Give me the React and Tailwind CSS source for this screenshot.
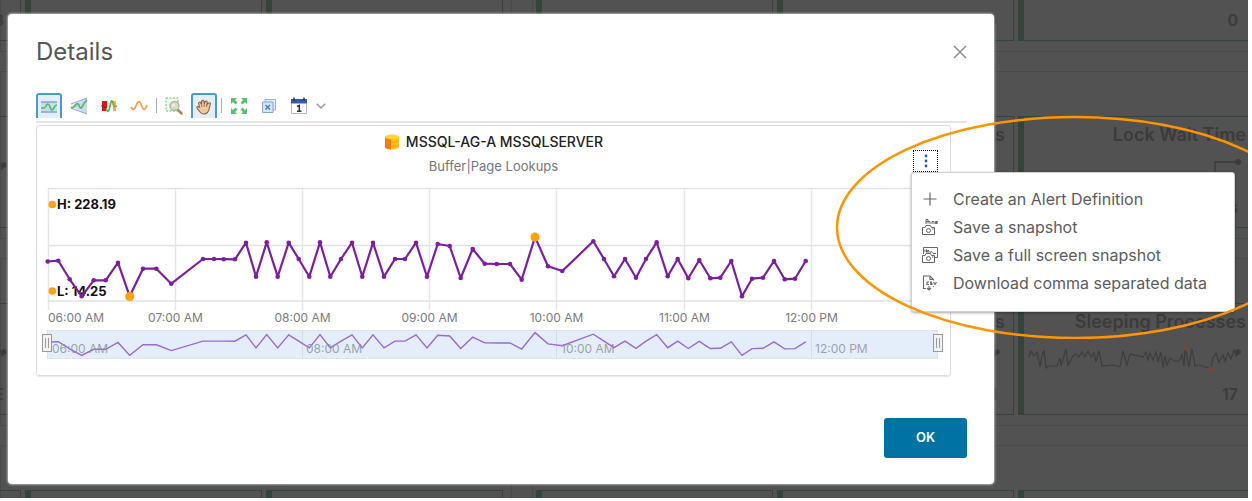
import React from "react";

const SERIES = [
  [47.7, 261.5], [58.3, 260.7], [69.7, 279.3], [81.7, 296.3], [93.7, 280.3], [105.7, 280.3], [118, 262.7],
  [129.7, 296.3], [143, 268.7], [156.3, 268.7], [171.3, 283.7], [203, 259], [214, 259], [223.7, 259.2],
  [235, 259.3], [246, 242.7], [256, 276.7], [266.7, 242.3], [277.7, 276.7], [288.7, 242.7], [298.7, 259],
  [309.3, 276.7], [320, 242.3], [330.3, 276.7], [341, 259], [352, 242.7], [362.3, 276.7], [373, 242.7],
  [384, 276.7], [395, 259], [405, 259], [416, 242.7], [427, 276.7], [437.7, 244], [449.7, 246], [460.7, 278],
  [472.7, 249], [484.7, 263.7], [496.7, 264], [510, 264], [521.7, 279.7], [535, 237], [548, 266.3],
  [562.3, 271], [593.3, 241.3], [604, 259], [614, 276.3], [625, 259], [636, 277.7], [646, 259], [656.7, 242.3],
  [667.7, 276.3], [677.7, 259], [688.3, 278.3], [699.3, 260], [710.3, 278.3], [720.3, 277.7], [731.3, 261],
  [742, 296.3], [752, 278.7], [763, 277.7], [774, 261], [784.7, 279.3], [795, 278.7], [805.7, 261],
];
const LINE = SERIES.map((p) => p.join(",")).join(" ");
const OVERVIEW = SERIES.map(([x, y]) => `${x},${(334.7 + (y - 242.5) * 0.385).toFixed(1)}`).join(" ");

const TICKS = [
  [48, "06:00 AM", "start"], [175.5, "07:00 AM", "middle"], [302.5, "08:00 AM", "middle"],
  [429.5, "09:00 AM", "middle"], [556.5, "10:00 AM", "middle"], [684.5, "11:00 AM", "middle"],
  [811.5, "12:00 PM", "middle"],
];
const RANGE_TICKS = [[52, "06:00 AM"], [306, "08:00 AM"], [561, "10:00 AM"], [815, "12:00 PM"]];

const SPARK =
  "0,9 2,3 5,8 8,4 11,19 13,8 15,2 17,20 19,18 28,18 31,10 32,18 35,8 37,1 39,17 44,8 47,6 50,9 53,4 56,9 59,3 62,9 65,5 67,14 70,3 73,18 85,17 91,19 94,3 98,17 101,6 114,9 117,4 119,12 121,5 124,12 127,4 129,14 132,4 134,20 136,8 138,17 141,10 145,13 150,13 153,7 155,18 156,0 160,19 163,1 166,18 170,17 176,19 182,20 184,10 187,5 190,14 194,7 196,13 199,5 202,11 205,2 207,8 210,4";

function Card({ title, value, spark, step }) {
  return (
    <article className="flex h-28 w-[237px] shrink-0 flex-col items-end border border-l-[6px] border-[#33453a] pr-2 font-semibold text-[#3b3b3b]">
      <h3 className="mt-1 h-7 text-lg leading-7 whitespace-nowrap">{title}</h3>
      <svg viewBox="0 0 222 30" className="mt-2 h-[30px] w-[222px]" aria-hidden="true">
        {spark && (
          <>
            <polyline points={SPARK} transform="translate(5 4)" fill="none" stroke="#3d3d3d" strokeWidth="1.2" />
            <circle cx="161" cy="4" r="2.6" fill="#7d4533" />
            <circle cx="187" cy="25" r="2.6" fill="#7d4533" />
            <circle cx="214" cy="8" r="2.8" fill="#3b3b3b" />
          </>
        )}
        {step && (
          <>
            <path d="M191 18V5H214" fill="none" stroke="#3b3b3b" strokeWidth="1.5" />
            <circle cx="214" cy="5" r="3" fill="#3b3b3b" />
          </>
        )}
      </svg>
      <p className="mt-2 mr-2 h-6 text-base leading-6">{value}</p>
    </article>
  );
}

function Panel({ cards, className }) {
  return (
    <section className={"flex h-[168px] gap-1 border border-[#494949] pt-11 " + className}>
      {cards.map((c, i) => (
        <Card key={i} {...c} />
      ))}
    </section>
  );
}

const DASHBOARD = [
  [[{ value: "3" }, {}, {}], [{}, { value: "0" }, { value: "0" }]],
  [[{ spark: true }, {}, {}], [{}, { title: "Waits" }, { title: "Lock Wait Time", value: "ms", step: true }]],
  [
    [{ value: "NONE", spark: true }, {}, {}],
    [{}, { title: "User Processes", value: "1", spark: true }, { title: "Sleeping Processes", value: "17", spark: true }],
  ],
  [[{}, {}, {}], [{}, {}, {}]],
];

function Dashboard() {
  return (
    <div className="absolute inset-0 overflow-hidden bg-[#525252]" aria-hidden="true">
      <div className="-mt-[116px] flex flex-col gap-[19px]">
        {DASHBOARD.map(([left, right], i) => (
          <div key={i} className="flex gap-5">
            <Panel cards={left} className="w-[512px] shrink-0 justify-end pr-2" />
            <Panel cards={right} className="flex-1 pl-[3px]" />
          </div>
        ))}
      </div>
    </div>
  );
}

function Tool({ label, active, children }) {
  return (
    <button
      type="button"
      aria-label={label}
      aria-pressed={!!active}
      className={
        "flex h-[25px] w-[26px] items-center justify-center " +
        (active ? "rounded-t-[3px] border-2 border-b-0 border-[#4c9ac9] bg-[#e1eff7]" : "")
      }
    >
      <svg viewBox="0 0 18 18" className="size-[18px] shrink-0" fill="none">
        {children}
      </svg>
    </button>
  );
}

function Toolbar() {
  return (
    <div role="toolbar" aria-label="Chart tools" className="flex items-center gap-1">
      <Tool label="Dynamic threshold" active>
        <path d="M1 4H17V14H1Z" fill="#c9dcec" />
        <path d="M1 4H17M1 14H17" stroke="#86a3cf" strokeWidth="1.3" />
        <path d="M1 10H4C6 10 6 6 8 6S10 12 12 12S14 7 17 7" stroke="#4cba5d" strokeWidth="1.6" />
      </Tool>
      <Tool label="Trend line">
        <path d="M1 9L17 1V17Z" fill="#ccd8ec" />
        <path d="M1 7L17 1M1 11L17 17" stroke="#93aad4" strokeWidth="1.3" />
        <path d="M1 10C4 13 6 5 8 7S10 13 12 10S14 5 17 3" stroke="#4cba5d" strokeWidth="1.6" />
      </Tool>
      <Tool label="Anomalies">
        <path d="M2 4H7V14H2Z" fill="#f20d0d" />
        <path d="M13 4H16V14H13Z" fill="#ffb347" />
        <path d="M1 9H2M6 11C8 17 9 14 10 9S12 2 13 6S14 10 17 9" stroke="#4cba5d" strokeWidth="1.7" />
        <path d="M3 9L6 11" stroke="#7e2a16" strokeWidth="1.7" />
        <path d="M13 5L14 10" stroke="#e58a20" strokeWidth="1.7" />
      </Tool>
      <Tool label="Data line">
        <path d="M1 10C3 14 5 12 6 9S9 2 11 7S14 16 17 8" stroke="#f5a04a" strokeWidth="1.7" />
      </Tool>
      <span className="h-[15px] w-px bg-[#aaaaaa]" />
      <Tool label="Zoom the view">
        <path d="M1 1H13V14H1Z" fill="#eefaee" stroke="#62c76a" strokeDasharray="2 1.5" />
        <path d="M12.5 12.5L16.5 16.5" stroke="#a48d5a" strokeWidth="2.5" strokeLinecap="round" />
        <circle cx="9.5" cy="9" r="4.5" fill="#d5dfb0" stroke="#a7b5bd" strokeWidth="1.3" />
        <circle cx="8.5" cy="8" r="1.8" fill="#f5f2cd" />
      </Tool>
      <Tool label="Pan the view" active>
        <path
          d="M5.5 14.5C4 12.5 1.5 10.5 1.8 9.3S4 8.5 4.8 9.6L3.6 5.6C3.3 4 5.2 3.6 5.8 5L6.5 6.5L6.6 3.6C6.7 2 8.9 2 9 3.6L9.3 6L10 3.8C10.5 2.4 12.5 2.9 12.2 4.5L12 6.8L13.5 5.2C14.6 4.2 16 5.3 15.3 6.6C14.3 9 14.5 12 12.5 14.5C10.5 16.5 7 16.5 5.5 14.5Z"
          fill="#f0c89d"
          stroke="#8c6546"
          strokeWidth="1.1"
        />
        <path d="M6.5 6.5L7 9M9.3 6L9.2 9M12 6.8L11.3 9" stroke="#8c6546" strokeWidth=".8" />
      </Tool>
      <span className="h-[15px] w-px bg-[#aaaaaa]" />
      <Tool label="Fit to view">
        <path
          d="M1 1H7L5 3L7.5 5.5L5.500 7.5L3 5L1 7ZM17 1V7L15 5L12.5 7.5L10.5 5.5L13 3L11 1ZM1 17V11L3 13L5.5 10.5L7.5 12.5L5 15L7 17ZM17 17H11L13 15L10.5 12.5L12.5 10.5L15 13L17 11Z"
          fill="#58c071"
        />
      </Tool>
      <Tool label="Show point values">
        <path d="M5 2.5H15.5V13H5Z" fill="#e1ebf5" stroke="#9bb5d1" />
        <path d="M2.5 5H13V15.5H2.5Z" fill="#d6e5f3" stroke="#84a7cd" />
        <path d="M5.5 8L10 12.5M10 8L5.5 12.5" stroke="#457fbb" strokeWidth="1.5" />
      </Tool>
      <Tool label="Date range">
        <path d="M1.5 3H16.5V16.5H1.5Z" fill="#fff" stroke="#a9b8e3" />
        <path d="M1 2H17V6.5H1Z" fill="#395b9d" />
        <path d="M4 .5V4M14 .5V4" stroke="#224078" strokeWidth="1.6" />
        <path d="M7 9.5L9.3 8.5V14M7 14.3H11.5" stroke="#333" strokeWidth="1.5" />
      </Tool>
      <button type="button" aria-label="More date options">
        <svg viewBox="0 0 10 8" className="h-2 w-[10px]" fill="none">
          <path d="M.8 1.8L5 6L9.2 1.8" stroke="#999" strokeWidth="1.5" />
        </svg>
      </button>
    </div>
  );
}

function Handle({ x }) {
  return (
    <g>
      <rect x={x + 0.5} y="334.5" width="9" height="17" fill="#f2f2f2" stroke="#999" />
      <path d={`M${x + 3.5} 338V348M${x + 6.5} 338V348`} stroke="#999" />
    </g>
  );
}

function Chart() {
  return (
    <svg viewBox="37 182 913 188" className="h-auto w-full" role="img" aria-label="Buffer Page Lookups over time">
      <path d="M48 188.5H938M48 245.5H938M48 301H938" stroke="#e0e2e6" strokeWidth="1.5" />
      <path
        d="M48.5 188V310M175.5 188V310M302.5 188V310M429.5 188V310M556.5 188V310M684.5 188V310M811.5 188V310M938 188V301"
        stroke="#e3e5e9"
        strokeWidth="1.5"
      />
      <g className="text-[12px]" fill="#7b7b7b">
        {TICKS.map(([x, t, a]) => (
          <text key={t} x={x} y="322" textAnchor={a}>{t}</text>
        ))}
      </g>
      <rect x="47.5" y="330.5" width="890" height="28" fill="#e4eefa" stroke="#dfe3e8" />
      <path d="M302.5 331V358M556.5 331V358M811.5 331V358" stroke="#d2dcea" />
      <polyline points={OVERVIEW} fill="none" stroke="#9b6acb" strokeWidth="1.4" />
      <g className="text-[12px]" fill="#8b929a" fillOpacity=".85">
        {RANGE_TICKS.map(([x, t]) => (
          <text key={t} x={x} y="353">{t}</text>
        ))}
      </g>
      <Handle x={42} />
      <Handle x={933} />
      <g className="text-[13px] font-bold" fill="#111">
        <text x="57" y="209">H: 228.19</text>
        <text x="57" y="296">L: 14.25</text>
      </g>
      <polyline points={LINE} fill="none" stroke="#7a1fa2" strokeWidth="2.2" strokeLinejoin="round" />
      {SERIES.map(([x, y]) => (
        <circle key={x} cx={x} cy={y} r="2.3" fill="#7a1fa2" />
      ))}
      <g fill="#ffa20a">
        <circle cx="52.3" cy="204.5" r="3.8" />
        <circle cx="52.3" cy="291" r="3.8" />
        <circle cx="129.7" cy="296.5" r="4.5" />
        <circle cx="535" cy="237" r="4.5" />
      </g>
    </svg>
  );
}

function CameraIcon({ full }) {
  return (
    <svg viewBox="0 0 16 16" className="size-4 shrink-0" fill="none" stroke="#666" strokeWidth="1">
      {full ? (
        <>
          <path d="M1.5 7V.5H15.5V10.5H13" />
          <path d="M3 5V2.5M4.5 5.5V2.5L6 5.5V3L8 5.5L9.5 4.5L11 6.5H14" />
        </>
      ) : (
        <path d="M4 5V.5H6V4.5M4 2.5H8V5M10 5V2.5H12V5M15.500 4.500H13.500V2.500H15.500V3.500H13.500" />
      )}
      <path d="M.5 8.5H3L4 6.5H8.5L9.5 8.5H12.5V15.5H.5Z" fill="#fff" />
      <circle cx="6.500" cy="11.500" r="2" />
      <path d="M10 10H11.5" />
    </svg>
  );
}

function MenuItem({ icon, children }) {
  return (
    <li role="none">
      <button
        type="button"
        role="menuitem"
        className="flex h-7 w-full items-center gap-[15px] px-[10px] text-left text-base whitespace-nowrap text-[#5c5c5c]"
      >
        {icon}
        {children}
      </button>
    </li>
  );
}

function ActionsMenu() {
  return (
    <div className="relative mr-3">
      <button
        type="button"
        aria-label="Chart actions"
        aria-haspopup="menu"
        aria-expanded="true"
        className="flex h-[22px] w-[25px] items-center justify-center border border-dotted border-black"
      >
        <svg viewBox="0 0 4 14" className="h-[14px] w-1" fill="#1b6390">
          <circle cx="2" cy="2" r="1.4" />
          <circle cx="2" cy="7" r="1.4" />
          <circle cx="2" cy="12" r="1.4" />
        </svg>
      </button>
      <ul
        role="menu"
        className="absolute top-full -left-0.5 z-10 w-[324px] rounded-[3px] border border-[#d0d0d0] bg-white pt-3 pb-[14px] shadow-[0_1px_3px_rgba(0,0,0,0.35)]"
      >
        <MenuItem
          icon={
            <svg viewBox="0 0 16 16" className="size-4 shrink-0" stroke="#666" strokeWidth="1.2">
              <path d="M8 1.5V14.5M1.5 8H14.5" />
            </svg>
          }
        >
          Create an Alert Definition
        </MenuItem>
        <MenuItem icon={<CameraIcon />}>Save a snapshot</MenuItem>
        <MenuItem icon={<CameraIcon full />}>Save a full screen snapshot</MenuItem>
        <MenuItem
          icon={
            <svg viewBox="0 0 16 16" className="size-4 shrink-0" fill="none" stroke="#666" strokeWidth="1.1">
              <path d="M4 13.5H1.5V1H8L11.5 4.5V5.5M8 1V4.5H11.5" />
              <path d="M7 7H5V9.5H7M10 7H8.5V8.3H10V9.5H8.2M11.5 7L13 9.5L14.5 7" />
              <path d="M7 11V15M5 13L7 15L9 13M11 11.5H12" />
            </svg>
          }
        >
          Download comma separated data
        </MenuItem>
      </ul>
      <svg
        viewBox="0 0 480 224"
        className="pointer-events-none absolute -top-[35px] -left-[78px] z-20 h-[224px] w-[480px] max-w-none"
        fill="none"
        aria-hidden="true"
      >
        <ellipse cx="240" cy="112.5" rx="238" ry="110.5" stroke="#ff9500" strokeWidth="2.5" />
      </svg>
    </div>
  );
}

function DatabaseIcon() {
  return (
    <svg viewBox="0 0 16 16" className="size-4" aria-hidden="true">
      <path d="M1 3V13C1 16.3 15 16.3 15 13V3Z" fill="#fbc116" />
      <path d="M1 3V13C1 14.5 4 15.5 7 15.5V3Z" fill="#f07b17" />
      <path d="M7 8C10 8.5 13 8 15 7M7 12C10 12.5 13 12 15 11" fill="none" stroke="#e79a0d" strokeWidth=".8" />
      <ellipse cx="8" cy="3" rx="7" ry="2.5" fill="#ffd52b" />
    </svg>
  );
}

export default function App() {
  return (
    <div className="relative mr-1 mb-[3px] overflow-hidden pt-[14px] pb-[14px] font-[Inter,'Liberation_Sans',sans-serif]">
      <Dashboard />
      <section
        role="dialog"
        aria-labelledby="dialog-title"
        className="relative mr-[254px] ml-2 rounded-[4px] bg-white pt-5 pr-[27px] pb-[26px] pl-7 shadow-[0_0_2px_1px_rgba(190,190,190,0.8)]"
      >
        <header className="flex items-center justify-between">
          <h2 id="dialog-title" className="text-2xl leading-9 text-[#565656]">Details</h2>
          <button type="button" aria-label="Close">
            <svg viewBox="0 0 14 14" className="h-[14px] w-[14px]" stroke="#8c8c8c" strokeWidth="1.5">
              <path d="M1 1L13 13M13 1L1 13" />
            </svg>
          </button>
        </header>
        <div className="mt-[23px] border-b-2 border-[#e4e4e4] pb-[3px]">
          <Toolbar />
        </div>
        <div className="mt-0.5 mr-4 rounded-[3px] border border-[#dcdcdc] pb-[5px] shadow-[0_1px_1px_#e8e8e8]">
          <div className="grid grid-cols-[1fr_auto_1fr] items-end pt-1">
            <div className="col-start-2 flex flex-col items-center">
              <h3 className="flex h-6 items-center gap-[6px] text-sm font-medium text-[#222]">
                <DatabaseIcon />
                MSSQL-AG-A MSSQLSERVER
              </h3>
              <p className="h-7 text-[13px] leading-6 text-[#777]">Buffer|Page Lookups</p>
            </div>
            <div className="col-start-3 flex justify-end pb-[10px]">
              <ActionsMenu />
            </div>
          </div>
          <Chart />
        </div>
        <footer className="mt-[42px] flex justify-end">
          <button type="button" className="h-10 w-[83px] rounded-[3px] bg-[#0072a3] text-[13px] font-semibold text-white">
            OK
          </button>
        </footer>
      </section>
    </div>
  );
}
